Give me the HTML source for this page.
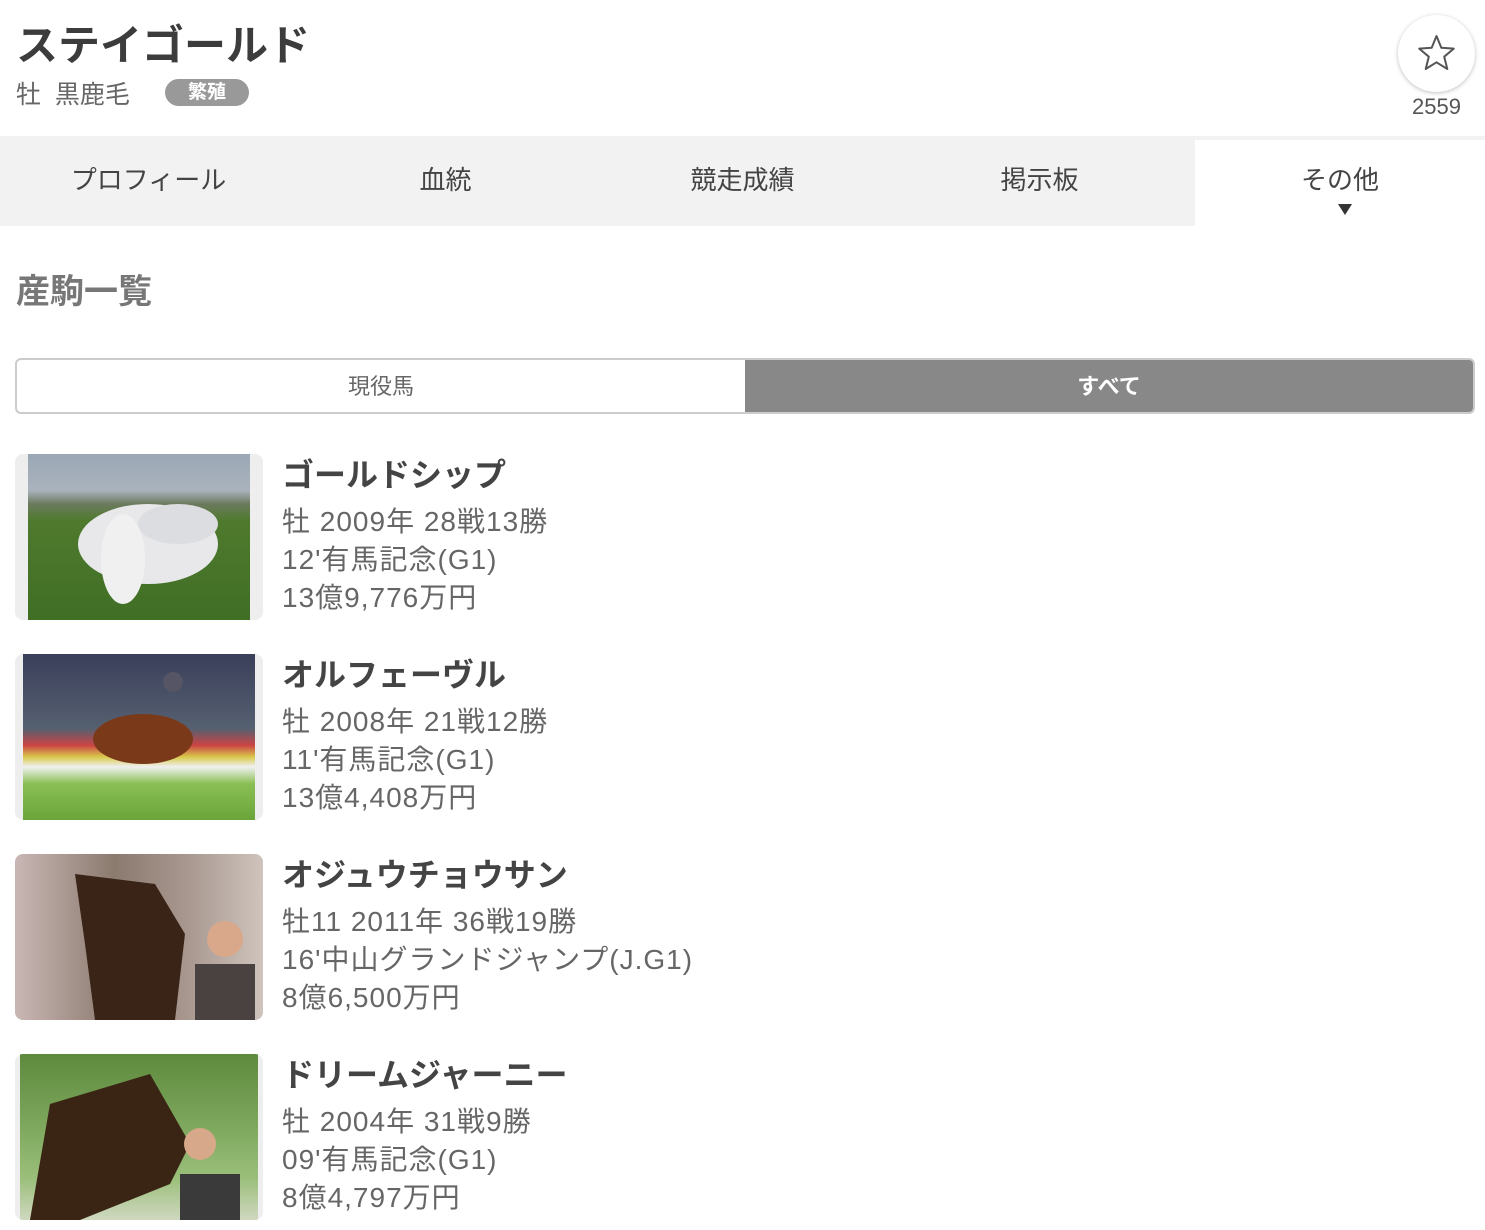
<!DOCTYPE html>
<html><head><meta charset="utf-8"><style>
*{margin:0;padding:0;box-sizing:border-box}
body{width:1485px;height:1230px;overflow:hidden;background:#fff;font-family:"Liberation Sans","Noto Sans CJK JP",sans-serif;color:#444;position:relative}
.abs{position:absolute}
.title{left:16px;top:20px;font-size:42px;font-weight:bold;color:#3c3c3c;line-height:52px}
.sub{left:16px;top:78px;font-size:25px;color:#666;line-height:34px}
.badge{left:165px;top:79px;width:84px;height:27px;border-radius:14px;background:#999;color:#fff;font-size:19px;font-weight:bold;text-align:center;line-height:27px}
.fav{left:1398px;top:15px;width:77px;height:77px;border-radius:50%;background:#fff;box-shadow:0 1px 4px rgba(0,0,0,.25)}
.cnt{left:1398px;top:94px;width:77px;text-align:center;font-size:22px;color:#555}
.tabs{left:0;top:136px;width:1485px;height:90px;background:#f2f2f2}
.tab{position:absolute;top:0;height:90px;width:297px;text-align:center;font-size:26px;color:#444;line-height:88px}
.tab.on{background:#fff;top:4px;height:86px;line-height:80px}
.h2{left:16px;top:264px;font-size:34px;font-weight:bold;color:#777}
.seg{left:15px;top:358px;width:1460px;height:56px;border:2px solid #ccc;border-radius:6px;overflow:hidden;display:flex}
.seg div{flex:1;text-align:center;line-height:54px;font-size:22px;color:#666}
.seg div.on{background:#888;color:#fff;font-weight:bold}
.card{left:15px;width:248px;height:166px;background:#eee;border-radius:8px;overflow:hidden}
.name{left:282px;font-size:32px;font-weight:bold;color:#444}
.info{left:282px;font-size:28px;color:#666;line-height:38px;letter-spacing:1px}
</style></head><body>
<div class="abs title">ステイゴールド</div>
<div class="abs sub">牡&nbsp;&nbsp;黒鹿毛</div>
<div class="abs badge">繁殖</div>
<div class="abs fav"><svg width="77" height="77" viewBox="0 0 77 77"><path d="M38.5 21 L43.3 32.8 L55.8 33.6 L46.2 41.7 L49.3 54 L38.5 47.3 L27.7 54 L30.8 41.7 L21.2 33.6 L33.7 32.8 Z" fill="none" stroke="#555" stroke-width="2" stroke-linejoin="round"/></svg></div>
<div class="abs cnt">2559</div>
<div class="abs tabs">
<div class="tab" style="left:0">プロフィール</div>
<div class="tab" style="left:297px">血統</div>
<div class="tab" style="left:594px">競走成績</div>
<div class="tab" style="left:891px">掲示板</div>
<div class="tab on" style="left:1195px;width:290px">その他<div style="position:absolute;left:143px;top:64px;width:0;height:0;border-left:7px solid transparent;border-right:7px solid transparent;border-top:11px solid #333"></div></div>
</div>
<div class="abs h2">産駒一覧</div>
<div class="abs seg"><div>現役馬</div><div class="on">すべて</div></div>

<div class="abs card" style="top:454px"><div style="position:absolute;left:13px;top:0;width:222px;height:166px;background:linear-gradient(#9aa7b5 0,#aab3bd 22%,#6c7a5e 30%,#4f7a2e 40%,#3f6e24 100%)">
<svg width="222" height="166" style="position:absolute;left:0;top:0"><ellipse cx="120" cy="90" rx="70" ry="40" fill="#e8e8ea"/><ellipse cx="95" cy="105" rx="22" ry="45" fill="#f0f0f0"/><ellipse cx="150" cy="70" rx="40" ry="20" fill="#dcdde0"/></svg></div></div>
<div class="abs name" style="top:450px">ゴールドシップ</div>
<div class="abs info" style="top:503px">牡 2009年 28戦13勝<br>12'有馬記念(G1)<br>13億9,776万円</div>

<div class="abs card" style="top:654px"><div style="position:absolute;left:8px;top:0;width:232px;height:166px;background:linear-gradient(#3a3f5a 0,#556070 45%,#c44 55%,#d8c94a 62%,#f0f0f0 68%,#8bbf55 78%,#6aa53a 100%)">
<svg width="232" height="166" style="position:absolute;left:0;top:0"><ellipse cx="120" cy="85" rx="50" ry="25" fill="#7a3a1a"/><circle cx="150" cy="28" r="10" fill="#556"/></svg></div></div>
<div class="abs name" style="top:650px">オルフェーヴル</div>
<div class="abs info" style="top:703px">牡 2008年 21戦12勝<br>11'有馬記念(G1)<br>13億4,408万円</div>

<div class="abs card" style="top:854px"><div style="position:absolute;left:0;top:0;width:248px;height:166px;background:linear-gradient(90deg,#c9b7b5 0,#8b7a6e 40%,#a89890 70%,#cfc4bd 100%)">
<svg width="248" height="166" style="position:absolute;left:0;top:0"><path d="M60 20 L140 30 L170 80 L160 166 L80 166 L70 90 Z" fill="#3a2418"/><rect x="180" y="110" width="60" height="56" fill="#4a4240"/><circle cx="210" cy="85" r="18" fill="#d9a88a"/></svg></div></div>
<div class="abs name" style="top:850px">オジュウチョウサン</div>
<div class="abs info" style="top:903px">牡11 2011年 36戦19勝<br>16'中山グランドジャンプ(J.G1)<br>8億6,500万円</div>

<div class="abs card" style="top:1054px"><div style="position:absolute;left:5px;top:0;width:238px;height:166px;background:linear-gradient(#5e8a3e 0,#7aa55a 40%,#9bbf7a 75%,#cfd8c0 100%)">
<svg width="238" height="166" style="position:absolute;left:0;top:0"><path d="M30 50 L130 20 L170 90 L150 130 L60 166 L10 166 Z" fill="#3a2414"/><rect x="160" y="120" width="60" height="46" fill="#3a3a3a"/><circle cx="180" cy="90" r="16" fill="#d8a88a"/></svg></div></div>
<div class="abs name" style="top:1050px">ドリームジャーニー</div>
<div class="abs info" style="top:1103px">牡 2004年 31戦9勝<br>09'有馬記念(G1)<br>8億4,797万円</div>
</body></html>
